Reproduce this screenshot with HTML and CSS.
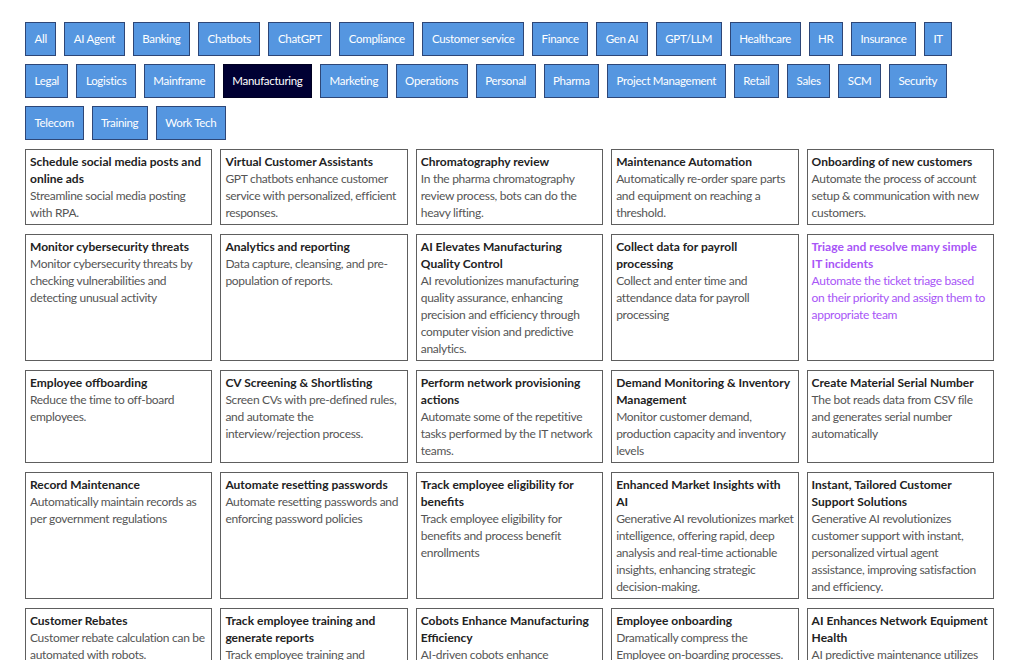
FILE: index.html
```html
<!DOCTYPE html>
<html lang="en">

<head>
  <meta charset="UTF-8">
  <meta name="viewport" content="width=device-width, initial-scale=1.0">
  <title>Use cases</title>
  <link rel="stylesheet" href="styles.css">
</head>

<body>
  <div class="container">
    <div class="filters">
      <button class="filter">All</button>
      <button class="filter">AI Agent</button>
      <button class="filter">Banking</button>
      <button class="filter">Chatbots</button>
      <button class="filter">ChatGPT</button>
      <button class="filter">Compliance</button>
      <button class="filter">Customer service</button>
      <button class="filter">Finance</button>
      <button class="filter">Gen AI</button>
      <button class="filter">GPT/LLM</button>
      <button class="filter">Healthcare</button>
      <button class="filter">HR</button>
      <button class="filter">Insurance</button>
      <button class="filter">IT</button>
      <button class="filter">Legal</button>
      <button class="filter">Logistics</button>
      <button class="filter">Mainframe</button>
      <button class="filter active">Manufacturing</button>
      <button class="filter">Marketing</button>
      <button class="filter">Operations</button>
      <button class="filter">Personal</button>
      <button class="filter">Pharma</button>
      <button class="filter">Project Management</button>
      <button class="filter">Retail</button>
      <button class="filter">Sales</button>
      <button class="filter">SCM</button>
      <button class="filter">Security</button>
      <button class="filter">Telecom</button>
      <button class="filter">Training</button>
      <button class="filter">Work Tech</button>
    </div>

    <div class="cards">
      <div class="card">
        <div class="card-title">Schedule social media posts and online ads</div>
        <div class="card-text">Streamline social media posting with RPA.</div>
      </div>
      <div class="card">
        <div class="card-title">Virtual Customer Assistants</div>
        <div class="card-text">GPT chatbots enhance customer service with personalized, efficient responses.</div>
      </div>
      <div class="card">
        <div class="card-title">Chromatography review</div>
        <div class="card-text">In the pharma chromatography review process, bots can do the heavy lifting.</div>
      </div>
      <div class="card">
        <div class="card-title">Maintenance Automation</div>
        <div class="card-text">Automatically re-order spare parts and equipment on reaching a threshold.</div>
      </div>
      <div class="card">
        <div class="card-title">Onboarding of new customers</div>
        <div class="card-text">Automate the process of account setup &amp; communication with new customers.</div>
      </div>

      <div class="card">
        <div class="card-title">Monitor cybersecurity threats</div>
        <div class="card-text">Monitor cybersecurity threats by checking vulnerabilities and detecting unusual activity</div>
      </div>
      <div class="card">
        <div class="card-title">Analytics and reporting</div>
        <div class="card-text">Data capture, cleansing, and pre-population of reports.</div>
      </div>
      <div class="card">
        <div class="card-title">AI Elevates Manufacturing Quality Control</div>
        <div class="card-text">AI revolutionizes manufacturing quality assurance, enhancing precision and efficiency through computer vision and predictive analytics.</div>
      </div>
      <div class="card">
        <div class="card-title">Collect data for payroll processing</div>
        <div class="card-text">Collect and enter time and attendance data for payroll processing</div>
      </div>
      <div class="card visited">
        <div class="card-title">Triage and resolve many simple IT incidents</div>
        <div class="card-text">Automate the ticket triage based on their priority and assign them to appropriate team</div>
      </div>

      <div class="card">
        <div class="card-title">Employee offboarding</div>
        <div class="card-text">Reduce the time to off-board employees.</div>
      </div>
      <div class="card">
        <div class="card-title">CV Screening &amp; Shortlisting</div>
        <div class="card-text">Screen CVs with pre-defined rules, and automate the interview/rejection process.</div>
      </div>
      <div class="card">
        <div class="card-title">Perform network provisioning actions</div>
        <div class="card-text">Automate some of the repetitive tasks performed by the IT network teams.</div>
      </div>
      <div class="card">
        <div class="card-title">Demand Monitoring &amp; Inventory Management</div>
        <div class="card-text">Monitor customer demand, production capacity and inventory levels</div>
      </div>
      <div class="card">
        <div class="card-title">Create Material Serial Number</div>
        <div class="card-text">The bot reads data from CSV file and generates serial number automatically</div>
      </div>

      <div class="card">
        <div class="card-title">Record Maintenance</div>
        <div class="card-text">Automatically maintain records as per government regulations</div>
      </div>
      <div class="card">
        <div class="card-title">Automate resetting passwords</div>
        <div class="card-text">Automate resetting passwords and enforcing password policies</div>
      </div>
      <div class="card">
        <div class="card-title">Track employee eligibility for benefits</div>
        <div class="card-text">Track employee eligibility for benefits and process benefit enrollments</div>
      </div>
      <div class="card">
        <div class="card-title">Enhanced Market Insights with AI</div>
        <div class="card-text">Generative AI revolutionizes market intelligence, offering rapid, deep analysis and real-time actionable insights, enhancing strategic decision-making.</div>
      </div>
      <div class="card">
        <div class="card-title">Instant, Tailored Customer Support Solutions</div>
        <div class="card-text">Generative AI revolutionizes customer support with instant, personalized virtual agent assistance, improving satisfaction and efficiency.</div>
      </div>

      <div class="card">
        <div class="card-title">Customer Rebates</div>
        <div class="card-text">Customer rebate calculation can be automated with robots.</div>
      </div>
      <div class="card">
        <div class="card-title">Track employee training and generate reports</div>
        <div class="card-text">Track employee training and certification progress and generate reports.</div>
      </div>
      <div class="card">
        <div class="card-title">Cobots Enhance Manufacturing Efficiency</div>
        <div class="card-text">AI-driven cobots enhance productivity and safety on the factory floor.</div>
      </div>
      <div class="card">
        <div class="card-title">Employee onboarding</div>
        <div class="card-text">Dramatically compress the Employee on-boarding processes.</div>
      </div>
      <div class="card">
        <div class="card-title">AI Enhances Network Equipment Health</div>
        <div class="card-text">AI predictive maintenance utilizes network data to prevent equipment failures.</div>
      </div>
    </div>
  </div>
</body>

</html>
```

FILE: styles.css
```css
body {
  font-family: Lato, "Open Sans", sans-serif;
  font-size: 12px;
  margin: 0;
  padding: 22px 25px;
  color: #222;
}

.container {
  max-width: 969px;
}

.filters {
  display: flex;
  flex-wrap: wrap;
  gap: 8px;
}

.filter {
  font-family: inherit;
  font-size: 11.5px;
  letter-spacing: -0.3px;
  line-height: 16px;
  padding: 8px 8.5px;
  background-color: #5596e0;
  color: white;
  border: 1px solid #2d4677;
  border-radius: 0;
  cursor: pointer;
}

.filter.active {
  background-color: #000033;
  border-color: #000022;
}

.cards {
  display: grid;
  grid-template-columns: repeat(5, 1fr);
  gap: 9px 8px;
  margin-top: 9px;
}

.card {
  border: 1px solid #5e5e5e;
  padding: 3px 4px;
  line-height: 17px;
}

.card-title {
  font-weight: bold;
  color: #222;
}

.card-text {
  color: #555;
  letter-spacing: -0.3px;
}

.card.visited .card-title,
.card.visited .card-text {
  color: #a855f7;
}
```
